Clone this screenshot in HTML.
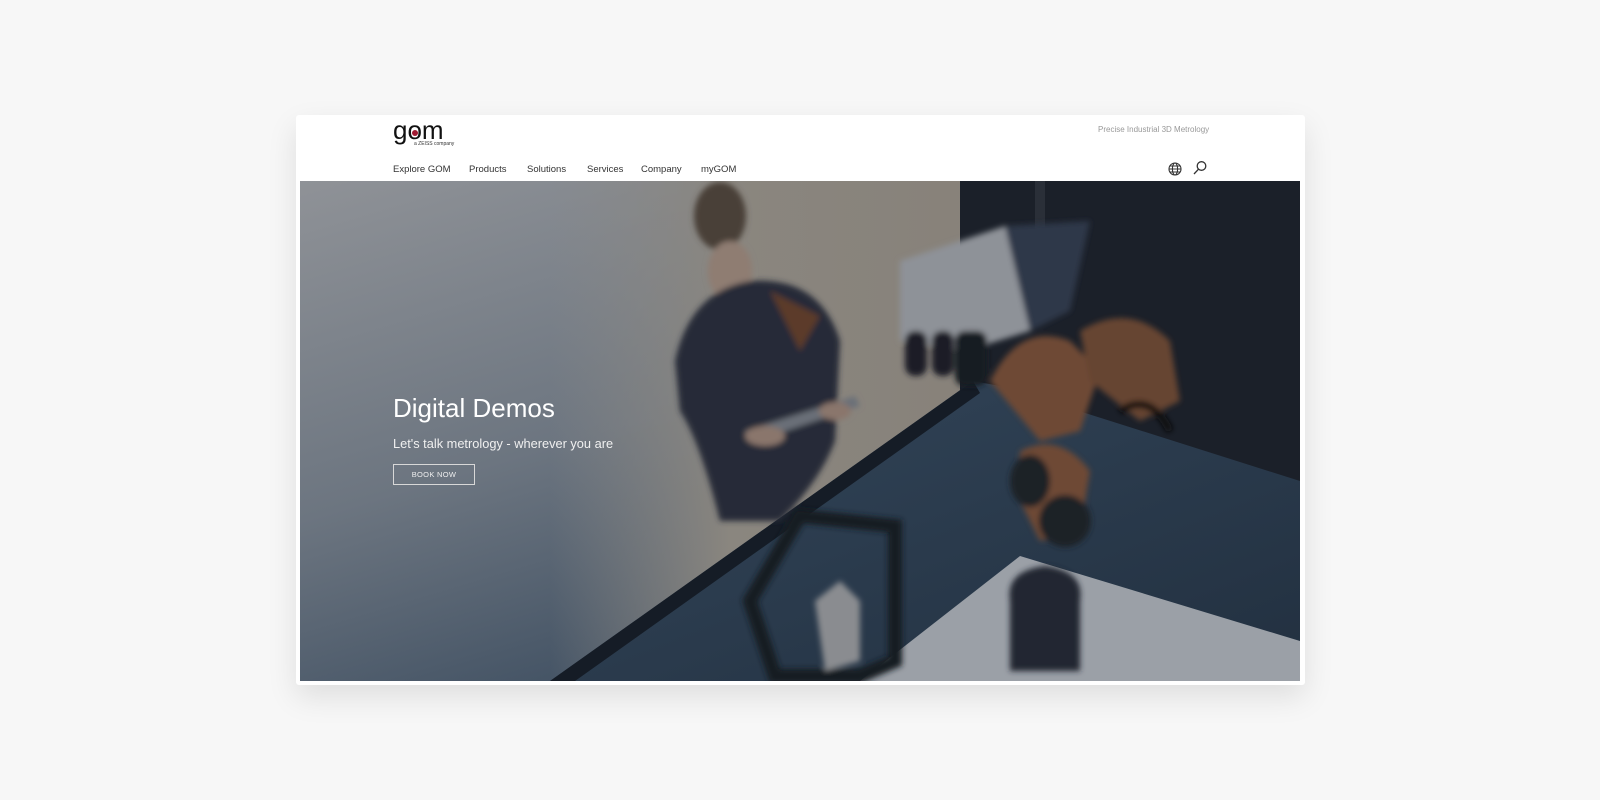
<!DOCTYPE html>
<html><head><meta charset="utf-8"><style>
*{margin:0;padding:0;box-sizing:border-box}
body{width:1600px;height:800px;background:#f7f7f7;font-family:"Liberation Sans",sans-serif;position:relative;overflow:hidden}
.card{position:absolute;left:296px;top:115px;width:1009px;height:570px;background:#fff;border-radius:3px;box-shadow:0 12px 30px rgba(0,0,0,.10)}
.logo{position:absolute;left:393px;top:117px;font-size:26px;line-height:1;color:#111;font-family:"Liberation Sans",sans-serif}
.dot{position:absolute;left:412px;top:130px;width:6px;height:6px;border-radius:50%;background:#a01830}
.zeiss{position:absolute;left:414px;top:142px;font-size:5px;line-height:1;color:#333}
.tag{position:absolute;left:1098px;top:125px;font-size:8px;color:#999}
.nav{position:absolute;top:164px;font-size:9.5px;color:#333}
.hero{position:absolute;left:300px;top:181px;width:1000px;height:500px;overflow:hidden}
.h1{position:absolute;left:393px;top:393px;font-size:26px;color:#fff}
.h2{position:absolute;left:393px;top:436px;font-size:12.8px;color:#f0f0f0}
.btn{position:absolute;left:393px;top:464px;width:82px;height:21px;border:1px solid #d8d8d8;color:#eee;font-size:7.5px;text-align:center;line-height:19px;letter-spacing:.3px}
</style></head><body>
<div class="card"></div>
<div class="logo">gom</div><div class="dot"></div><div class="zeiss">a ZEISS company</div>
<div class="tag">Precise Industrial 3D Metrology</div>
<div class="nav" style="left:393px">Explore GOM</div>
<div class="nav" style="left:469px">Products</div>
<div class="nav" style="left:527px">Solutions</div>
<div class="nav" style="left:587px">Services</div>
<div class="nav" style="left:641px">Company</div>
<div class="nav" style="left:701px">myGOM</div>
<svg style="position:absolute;left:1167px;top:161px" width="16" height="16" viewBox="0 0 16 16" fill="none" stroke="#333" stroke-width="1.1"><circle cx="8" cy="8" r="6"/><ellipse cx="8" cy="8" rx="2.6" ry="6"/><path d="M2 8h12M3 5h10M3 11h10"/></svg>
<svg style="position:absolute;left:1192px;top:160px" width="16" height="16" viewBox="0 0 16 16" fill="none" stroke="#333" stroke-width="1.3"><circle cx="9.5" cy="6" r="4.3"/><path d="M6.5 9.2L2 14"/></svg>
<div class="hero">
<svg width="1000" height="500" viewBox="0 0 1000 500">
<defs>
<linearGradient id="bg" x1="0" y1="0" x2="0.6" y2="1"><stop offset="0" stop-color="#8f9297"/><stop offset="0.5" stop-color="#6c7580"/><stop offset="1" stop-color="#34465a"/></linearGradient>
<linearGradient id="fl" x1="0" y1="0" x2="1" y2="0"><stop offset="0" stop-color="#8c8a87" stop-opacity="0"/><stop offset="0.4" stop-color="#8a867f"/><stop offset="1" stop-color="#878179"/></linearGradient>
<linearGradient id="tb" x1="0" y1="0" x2="1" y2="1"><stop offset="0" stop-color="#33465a"/><stop offset="1" stop-color="#223040"/></linearGradient>
<filter id="b"><feGaussianBlur stdDeviation="3"/></filter>
</defs>
<rect width="1000" height="500" fill="url(#bg)"/>
<path d="M250 0H700V200L400 430L250 500Z" fill="url(#fl)"/>
<rect x="660" y="0" width="340" height="340" fill="#1b2029"/>
<rect x="735" y="0" width="10" height="120" fill="#2a2f38"/>
<path d="M250 500L673 200L700 205L1000 300V500Z" fill="url(#tb)"/>
<path d="M250 500L673 200L680 212L275 500Z" fill="#151c26"/>
<path d="M560 500L720 375L1000 460V500Z" fill="#9ba0a7"/>
<g filter="url(#b)">
<ellipse cx="420" cy="35" rx="26" ry="34" fill="#4a4038"/>
<ellipse cx="430" cy="90" rx="22" ry="30" fill="#8f7d72"/>
<path d="M375 180Q390 110 450 100Q520 95 540 160L535 260Q520 300 480 340L420 340Q400 260 380 230Z" fill="#252c37"/>
<path d="M470 110L520 135L500 170Z" fill="#5c3b2a"/>
<path d="M445 250L555 215L560 225L450 262Z" fill="#6a7078"/>
<ellipse cx="465" cy="255" rx="20" ry="10" fill="#8a766c"/>
<ellipse cx="535" cy="230" rx="16" ry="9" fill="#8a766c"/>
<path d="M600 80L705 45L740 50L730 150L665 170L600 160Z" fill="#8e9298"/>
<path d="M705 45L790 40L770 130L730 150Z" fill="#2d3748"/>
<rect x="605" y="150" width="22" height="45" rx="10" fill="#1a1f27"/>
<rect x="632" y="150" width="22" height="45" rx="10" fill="#1a1f27"/>
<rect x="655" y="150" width="32" height="55" rx="10" fill="#151a22"/>
<path d="M690 200Q720 140 770 160L800 190L780 250L740 260Z" fill="#6e4a34"/>
<path d="M780 150Q830 120 870 160L880 220L840 240L790 200Z" fill="#664430"/>
<path d="M720 270Q760 250 790 290L780 350L740 360L720 320Z" fill="#6e4a34"/>
<ellipse cx="730" cy="300" rx="20" ry="26" fill="#1b2028"/>
<ellipse cx="765" cy="340" rx="26" ry="26" fill="#1b2028"/>
<path d="M820 230Q850 210 870 250" stroke="#111" stroke-width="7" fill="none"/>
<path d="M710 420Q705 390 745 385Q785 390 780 420L780 490H710Z" fill="#222831"/>
<path d="M450 420L500 335L595 345L595 480L560 495L475 495Z" fill="none" stroke="#181c22" stroke-width="14"/>
<path d="M515 420L540 400L560 420L560 480L525 490Z" fill="#8a8c90"/>
</g>
</svg>
</div>
<div class="h1">Digital Demos</div>
<div class="h2">Let's talk metrology - wherever you are</div>
<div class="btn">BOOK NOW</div>
</body></html>
